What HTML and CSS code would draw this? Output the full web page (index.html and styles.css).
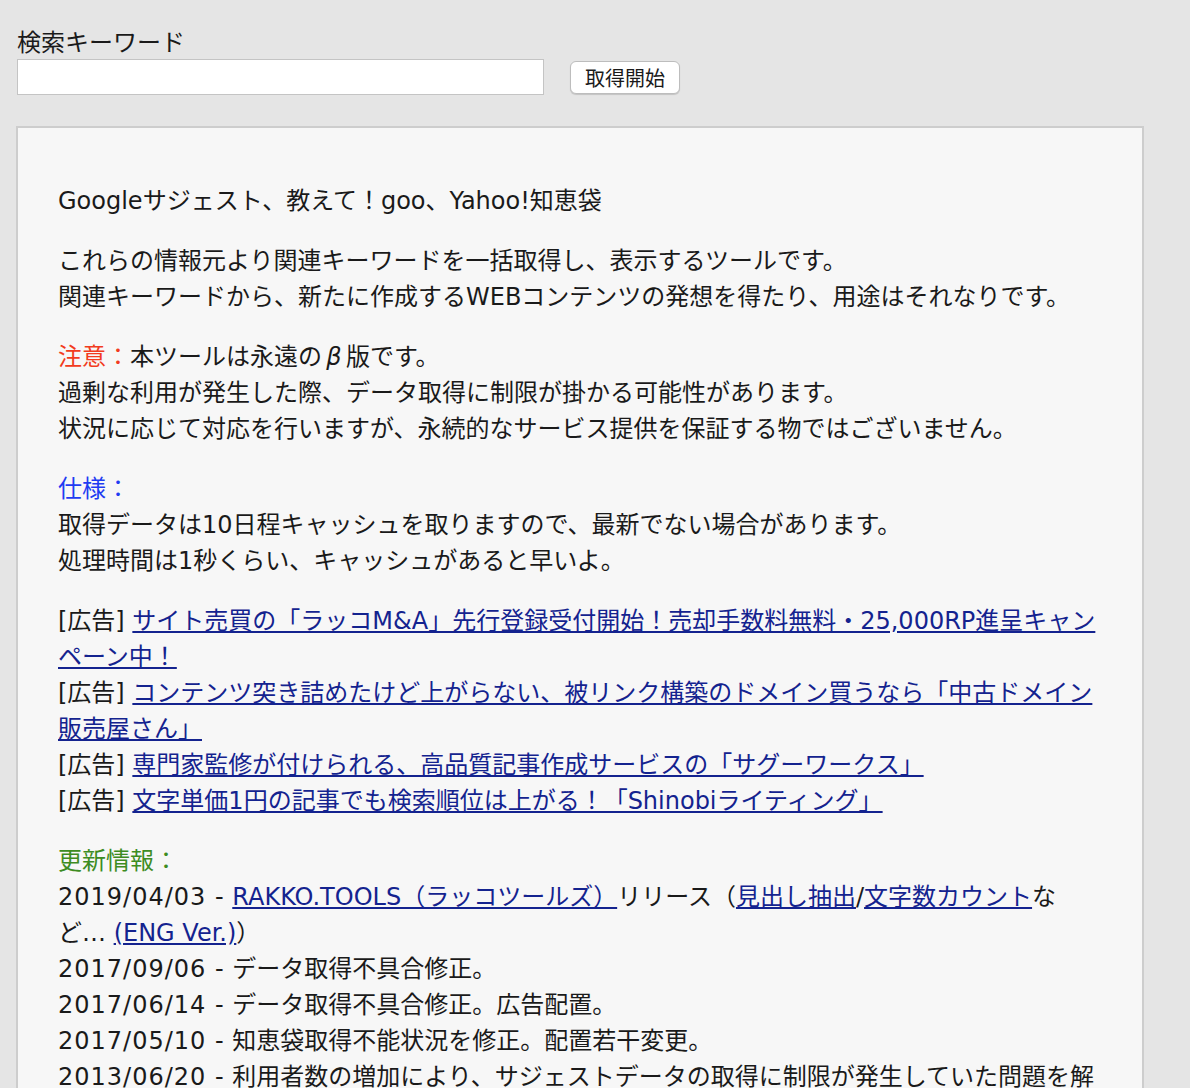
FILE: index.html
```html
<!DOCTYPE html>
<html lang="ja">
<head>
<meta charset="utf-8">
<title>関連キーワード取得ツール</title>
<link rel="stylesheet" href="styles.css">
</head>
<body>
<div class="page">
  <form class="search">
    <label class="search-label" for="kw">検索キーワード</label>
    <div class="search-row">
      <input id="kw" class="search-input" type="text">
      <button type="button" class="search-btn">取得開始</button>
    </div>
  </form>
  <div class="panel">
    <p>Googleサジェスト、教えて！goo、Yahoo!知恵袋</p>
    <p>これらの情報元より関連キーワードを一括取得し、表示するツールです。<br>関連キーワードから、新たに作成するWEBコンテンツの発想を得たり、用途はそれなりです。</p>
    <p><span class="red">注意：</span>本ツールは永遠の<span class="beta">β</span>版です。<br>過剰な利用が発生した際、データ取得に制限が掛かる可能性があります。<br>状況に応じて対応を行いますが、永続的なサービス提供を保証する物ではございません。</p>
    <p><span class="blue">仕様：</span><br>取得データは10日程キャッシュを取りますので、最新でない場合があります。<br>処理時間は1秒くらい、キャッシュがあると早いよ。</p>
    <p>[広告] <a href="#">サイト売買の「ラッコM&amp;A」先行登録受付開始！売却手数料無料・25,000RP進呈キャンペーン中！</a><br>[広告] <a href="#">コンテンツ突き詰めたけど上がらない、被リンク構築のドメイン買うなら「中古ドメイン販売屋さん」</a><br>[広告] <a href="#">専門家監修が付けられる、高品質記事作成サービスの「サグーワークス」</a><br>[広告] <a href="#">文字単価1円の記事でも検索順位は上がる！「Shinobiライティング」</a></p>
    <p><span class="green">更新情報：</span><br><span class="date">2019/04/03 -</span> <a href="#">RAKKO.TOOLS（ラッコツールズ）</a>リリース（<a href="#">見出し抽出</a>/<a href="#">文字数カウント</a>など… <a href="#">(ENG Ver.)</a>）<br><span class="date">2017/09/06 -</span> データ取得不具合修正。<br><span class="date">2017/06/14 -</span> データ取得不具合修正。広告配置。<br><span class="date">2017/05/10 -</span> 知恵袋取得不能状況を修正。配置若干変更。<br><span class="date">2013/06/20 -</span> 利用者数の増加により、サジェストデータの取得に制限が発生していた問題を解消しました。</p>
  </div>
</div>
</body>
</html>
```

FILE: styles.css
```css
html, body {
  margin: 0;
  padding: 0;
  background: #e5e5e5;
}
body {
  font-family: "DejaVu Sans", "Noto Sans CJK JP", sans-serif;
  color: #1a1a1a;
  font-size: 24px;
  line-height: 36px;
}
.page {
  padding: 22px 16px 0 16px;
}
.search {
  display: flex;
  flex-direction: column;
}
.search-label {
  display: block;
  font-family: "Noto Sans CJK JP", sans-serif;
  font-size: 24px;
  line-height: 37px;
  padding-left: 1px;
}
.search-row {
  display: flex;
  align-items: center;
  gap: 26px;
}
.search-input {
  box-sizing: border-box;
  width: 527px;
  height: 36px;
  margin: 0 0 0 1px;
  border: 1px solid #c4c4c4;
  background: #fff;
  padding: 0 6px;
  font-size: 20px;
  outline: none;
}
.search-btn {
  box-sizing: border-box;
  width: 110px;
  height: 33px;
  margin-top: 1px;
  background: #fff;
  border: 1px solid #bdbdbd;
  border-radius: 6px;
  box-shadow: 0 1px 1px rgba(0,0,0,0.15);
  font-family: "Noto Sans CJK JP", sans-serif;
  font-size: 20px;
  line-height: 1;
  color: #1a1a1a;
  padding: 0;
}
.panel {
  box-sizing: border-box;
  width: 1128px;
  margin-top: 31px;
  background: #f7f7f7;
  border: 2px solid #cdcdcd;
  padding: 31px 44px 40px 40px;
}
.panel p {
  margin: 24px 0;
}
.panel a {
  color: #14238f;
  text-decoration: underline;
}
.date {
  letter-spacing: 1px;
}
.beta {
  display: inline-block;
  width: 1em;
  text-align: center;
  font-style: italic;
}
.red { color: #f23b20; }
.blue { color: #1f3cf2; }
.green { color: #3d8c22; }
```
